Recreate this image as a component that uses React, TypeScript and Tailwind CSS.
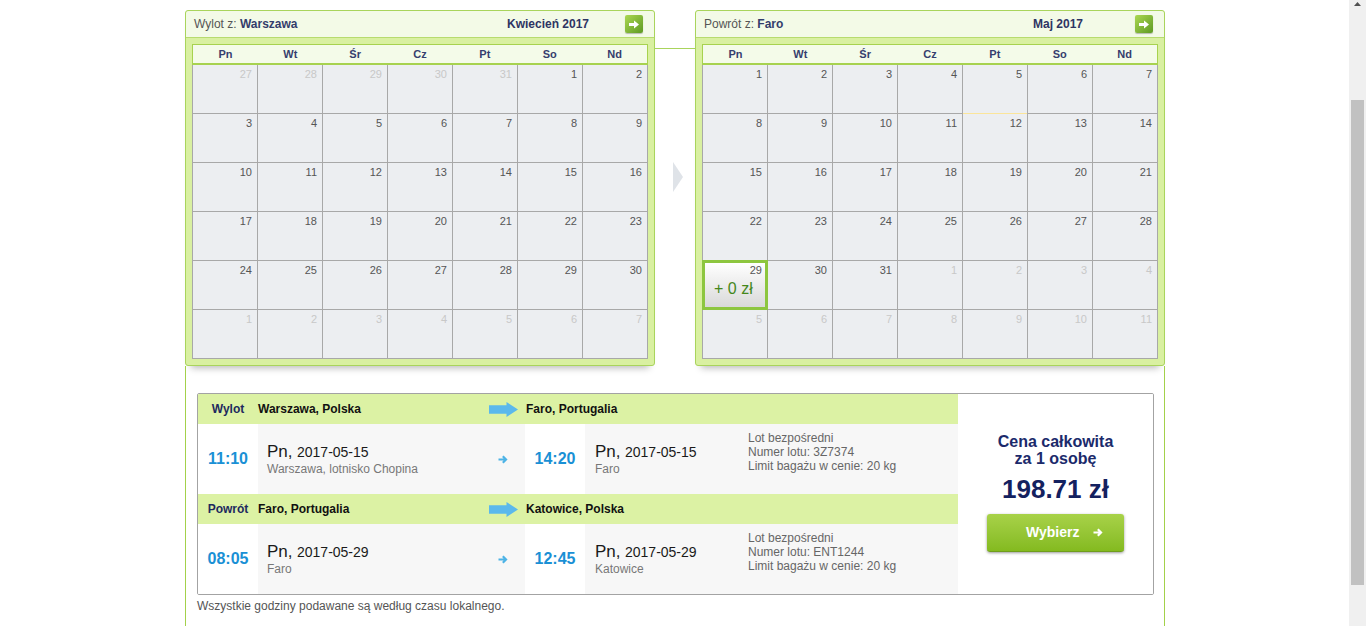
import React from "react";

type Cell = { n: number; muted: boolean };

const DAYS = ["Pn", "Wt", "Śr", "Cz", "Pt", "So", "Nd"];

const range = (from: number, to: number, muted: boolean): Cell[] =>
  Array.from({ length: to - from + 1 }, (_, i) => ({ n: from + i, muted }));

const APRIL: Cell[] = [...range(27, 31, true), ...range(1, 30, false), ...range(1, 7, true)];
const MAY: Cell[] = [...range(1, 31, false), ...range(1, 11, true)];

function NextArrow() {
  return (
    <div className="flex h-[18px] w-[18px] items-center justify-center rounded-[2px] bg-linear-to-br from-[#acd851] to-[#5d9a22] shadow-[0_1px_1px_rgba(0,0,0,0.25)]">
      <svg width="10" height="9" viewBox="0 0 10 9">
        <path d="M0 3h5V0.5L10 4.5 5 8.5V6H0z" fill="#fff" />
      </svg>
    </div>
  );
}

function RouteArrow() {
  return (
    <svg width="29" height="15" viewBox="0 0 29 15">
      <path d="M0 3.2h17.5V0L29 7.5 17.5 15v-3.2H0z" fill="#5bb9ec" />
    </svg>
  );
}

function SmallArrow({ color = "#4db3e6" }: { color?: string }) {
  return (
    <svg width="10" height="9" viewBox="0 0 10 9">
      <path d="M0.5 4.5h7.5M4.8 1.2 8.1 4.5 4.8 7.8" stroke={color} strokeWidth="2.1" fill="none" />
    </svg>
  );
}

function Calendar({
  label,
  city,
  month,
  cells,
  selected,
  marked,
}: {
  label: string;
  city: string;
  month: string;
  cells: Cell[];
  selected?: number;
  marked?: number;
}) {
  return (
    <div className="w-[470px] rounded-[3px] border border-[#a9d45c] bg-[#d9f0a1] shadow-[0_8px_7px_-6px_rgba(0,0,0,0.28)]">
      <div className="flex h-[27px] items-center rounded-t-[3px] border-b border-[#b7db6f] bg-[#f3fae7] pl-[8px]">
        <div className="flex-1 text-[12px]">
          <span className="text-[#555]">{label} </span>
          <span className="font-bold text-[#333d6b]">{city}</span>
        </div>
        <div className="w-[154px] text-center text-[12px] font-bold text-[#2e3463]">{month}</div>
        <div className="mr-[11px]">
          <NextArrow />
        </div>
      </div>
      <div className="p-[6px]">
        <div className="grid h-[21px] grid-cols-7 border-x border-t border-b-2 border-[#a7d24f] bg-[#f4fbe9]">
          {DAYS.map((d) => (
            <div key={d} className="text-center text-[11px] font-bold leading-[18px] text-[#363e6e]">
              {d}
            </div>
          ))}
        </div>
        <div className="grid grid-cols-7 border-l border-[#a8a8a8]">
          {cells.map((c, i) => (
            <div
              key={i}
              className={`relative h-[49px] border-r border-b border-[#a8a8a8] bg-[#eceef1] pr-[5px] pt-[3px] text-right text-[11px] leading-[13px] ${
                c.muted ? "text-[#c8c8c8]" : "text-[#555]"
              }`}
            >
              {c.n}
              {marked === i && <div className="absolute -top-px left-0 right-0 h-px bg-[#fbe59a]" />}
              {selected === i && (
                <div className="absolute -left-px -top-px -right-px -bottom-px border-[3px] border-[#8dc63f] bg-linear-to-b from-white to-[#d9d9d9] pr-[3px] pt-[1px]">
                  <div className="text-right text-[11px] leading-[13px] text-[#555]">{c.n}</div>
                  <div className="mt-[3px] pl-[9px] text-left text-[16px] leading-[18px] text-[#44871b]">+ 0 zł</div>
                </div>
              )}
            </div>
          ))}
        </div>
      </div>
    </div>
  );
}

type Leg = {
  kind: string;
  from: string;
  to: string;
  dep: string;
  arr: string;
  date: string;
  depPlace: string;
  arrPlace: string;
  flight: string;
};

const LEGS: Leg[] = [
  {
    kind: "Wylot",
    from: "Warszawa, Polska",
    to: "Faro, Portugalia",
    dep: "11:10",
    arr: "14:20",
    date: "2017-05-15",
    depPlace: "Warszawa, lotnisko Chopina",
    arrPlace: "Faro",
    flight: "3Z7374",
  },
  {
    kind: "Powrót",
    from: "Faro, Portugalia",
    to: "Katowice, Polska",
    dep: "08:05",
    arr: "12:45",
    date: "2017-05-29",
    depPlace: "Faro",
    arrPlace: "Katowice",
    flight: "ENT1244",
  },
];

function DateBlock({ date, place }: { date: string; place: string }) {
  return (
    <div>
      <div className="leading-[19px] text-[#1a1a1a]">
        <span className="text-[17px]">Pn,</span> <span className="text-[14px]">{date}</span>
      </div>
      <div className="text-[12px] leading-[14px] text-[#777]">{place}</div>
    </div>
  );
}

function LegRows({ leg }: { leg: Leg }) {
  return (
    <>
      <div className="flex h-[30px] items-center bg-[#dcf2a4] text-[12px] font-bold">
        <div className="w-[60px] text-center text-[#1e2a5e]">{leg.kind}</div>
        <div className="flex w-[267px] items-center justify-between pr-[7px] text-[#111]">
          <span>{leg.from}</span>
          <RouteArrow />
        </div>
        <div className="pl-[1px] text-[#111]">{leg.to}</div>
      </div>
      <div className="flex h-[70px]">
        <div className="flex w-[60px] items-center justify-center bg-white text-[16px] font-bold text-[#1a90d5]">
          {leg.dep}
        </div>
        <div className="flex w-[267px] items-center bg-[#f7f7f7] pl-[9px] pr-[17px]">
          <div className="flex-1">
            <DateBlock date={leg.date} place={leg.depPlace} />
          </div>
          <SmallArrow />
        </div>
        <div className="flex w-[60px] items-center justify-center bg-white text-[16px] font-bold text-[#1a90d5]">
          {leg.arr}
        </div>
        <div className="flex flex-1 bg-[#f7f7f7]">
          <div className="flex w-[163px] items-center pl-[10px]">
            <DateBlock date={leg.date} place={leg.arrPlace} />
          </div>
          <div className="pt-[7px] text-[12px] leading-[14px] text-[#666]">
            <div>Lot bezpośredni</div>
            <div>Numer lotu: {leg.flight}</div>
            <div>Limit bagażu w cenie: 20 kg</div>
          </div>
        </div>
      </div>
    </>
  );
}

export default function App() {
  return (
    <div className="flex h-[626px] w-[1366px] overflow-hidden bg-white font-['Liberation_Sans',Arial,sans-serif]">
      <div className="flex min-w-0 flex-1 flex-col">
        {/* month pickers */}
        <div className="ml-[185px] flex pt-[10px]">
          <Calendar label="Wylot z:" city="Warszawa" month="Kwiecień 2017" cells={APRIL} />
          <div className="flex w-[40px] flex-col">
            <div className="mt-[38px] h-px bg-[#a9d45c]" />
            <div className="ml-[18px] mt-[113px] h-0 w-0 border-y-[15px] border-l-[10px] border-y-transparent border-l-[#dfe3e8]" />
          </div>
          <Calendar
            label="Powrót z:"
            city="Faro"
            month="Maj 2017"
            cells={MAY}
            selected={28}
            marked={11}
          />
        </div>

        {/* itinerary summary */}
        <div className="ml-[185px] flex w-[980px] flex-1 flex-col border-x border-[#a3d14a] px-[11px] pt-[27px]">
          <div className="flex h-[202px] w-[957px] overflow-hidden rounded-[2px] border border-[#a3a3a3]">
            <div className="flex w-[760px] flex-col">
              {LEGS.map((leg) => (
                <LegRows key={leg.kind} leg={leg} />
              ))}
            </div>
            <div className="flex flex-1 flex-col items-center bg-white pt-[39px] text-[#1b2a6b]">
              <div className="text-center text-[16px] font-bold leading-[17px]">
                Cena całkowita
                <br />
                za 1 osobę
              </div>
              <div className="mt-[7px] text-[26px] font-bold leading-[30px] text-[#14215f]">198.71 zł</div>
              <div className="mt-[10px] flex h-[38px] w-[137px] items-center rounded-[3px] border-b border-[#6f9d1c] bg-linear-to-b from-[#a8d248] to-[#84ba1f] pl-[39px] text-[14px] font-bold text-white shadow-[0_1px_3px_rgba(0,0,0,0.4)]">
                Wybierz
                <span className="ml-[14px] flex">
                  <SmallArrow color="#ffffff" />
                </span>
              </div>
            </div>
          </div>
          <div className="pt-[4px] text-[12px] leading-[14px] text-[#555]">
            Wszystkie godziny podawane są według czasu lokalnego.
          </div>
        </div>
      </div>

      {/* window scrollbar */}
      <div className="flex w-[17px] shrink-0 flex-col items-center bg-[#f0f0f0]">
        <div className="pt-[2px]">
          <svg width="7" height="4" viewBox="0 0 7 4">
            <path d="M3.5 0 7 4H0z" fill="#505050" />
          </svg>
        </div>
        <div className="mt-[94px] h-[485px] w-[13px] bg-[#c1c1c1]" />
      </div>
    </div>
  );
}
